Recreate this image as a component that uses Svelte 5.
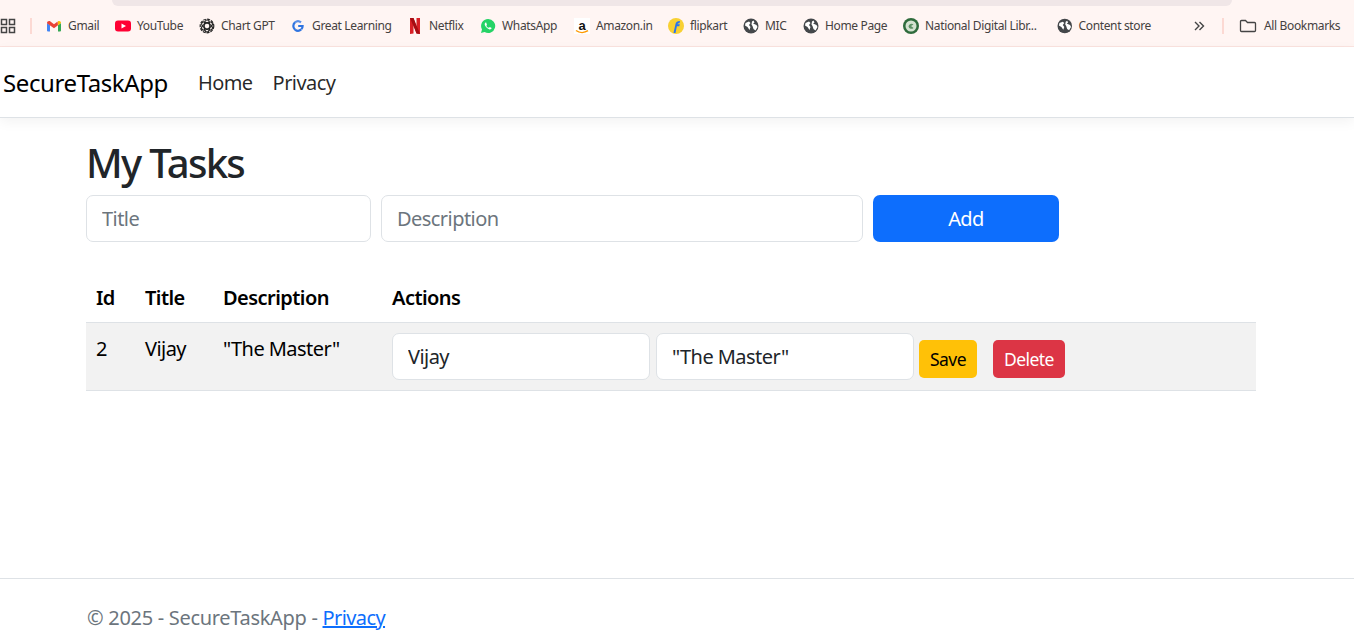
<script>
  const bookmarks = [
    { name: 'Gmail', icon: 'gmail', w: 69 },
    { name: 'YouTube', icon: 'youtube', w: 84 },
    { name: 'Chart GPT', icon: 'gpt', w: 91 },
    { name: 'Great Learning', icon: 'google', w: 117 },
    { name: 'Netflix', icon: 'netflix', w: 73 },
    { name: 'WhatsApp', icon: 'whatsapp', w: 94 },
    { name: 'Amazon.in', icon: 'amazon', w: 94 },
    { name: 'flipkart', icon: 'flipkart', w: 75 },
    { name: 'MIC', icon: 'globe', w: 60 },
    { name: 'Home Page', icon: 'globe', w: 100 },
    { name: 'National Digital Libr...', icon: 'ndl', w: 154 },
    { name: 'Content store', icon: 'globe', w: 94 }
  ];

  let tasks = [{ id: 2, title: 'Vijay', description: '"The Master"' }];
</script>

<div class="page">
  <div class="chrome">
    <div class="address"></div>
    <div class="bookmarks">
      <svg class="apps" width="16" height="16" viewBox="0 0 16 16" fill="none" stroke="#444" stroke-width="1.5">
        <rect x="1.5" y="1.5" width="5" height="5" />
        <rect x="9.5" y="1.5" width="5" height="5" />
        <rect x="1.5" y="9.5" width="5" height="5" />
        <rect x="9.5" y="9.5" width="5" height="5" />
      </svg>
      <span class="sep first"></span>
      {#each bookmarks as b}
        <div class="bookmark" style="width: {b.w}px">
          <svg width="16" height="16" viewBox="0 0 16 16">
            {#if b.icon === 'gmail'}
              <path d="M1 13.500V5l3 2.300v6.200H2a1 1 0 0 1-1-1z" fill="#4285f4" />
              <path d="M12 13.500V7.300L15 5v7.500a1 1 0 0 1-1 1z" fill="#34a853" />
              <path d="M1 5.300C1 3.300 3 2.400 4.400 3.500L8 6.300l3.600-2.800L12 7.300 8 10.300 1 5.300z" fill="#ea4335" />
              <path d="M12 7.300V3.200C13.500 2.400 15 3.400 15 5z" fill="#fbbc04" />
            {:else if b.icon === 'youtube'}
              <rect x="0" y="2.500" width="16" height="11" rx="3" fill="#ff0033" />
              <path d="M6.500 5.500 11 8l-4.500 2.500z" fill="#fff" />
            {:else if b.icon === 'gpt'}
              <g fill="none" stroke="#222" stroke-width="1.200">
                <circle cx="8" cy="8" r="6.800" stroke-dasharray="3 1" />
                <ellipse cx="8" cy="8" rx="6" ry="2.800" transform="rotate(30 8 8)" />
                <ellipse cx="8" cy="8" rx="6" ry="2.800" transform="rotate(90 8 8)" />
                <ellipse cx="8" cy="8" rx="6" ry="2.800" transform="rotate(150 8 8)" />
              </g>
            {:else if b.icon === 'google'}
              <path d="M11 4.400A4.700 4.700 0 0 0 5 4.400" fill="none" stroke="#5a8fe6" stroke-width="2.200" />
              <path d="M5 4.400A4.700 4.700 0 0 0 5 11.600" fill="none" stroke="#2f74e0" stroke-width="2.200" />
              <path d="M5 11.600A4.700 4.700 0 0 0 11.200 11.400" fill="none" stroke="#2f74e0" stroke-width="2.200" />
              <path d="M8.200 8h4.400c0 1.400-.4 2.500-1.300 3.300" fill="none" stroke="#2f74e0" stroke-width="2.200" />
            {:else if b.icon === 'netflix'}
              <path d="M3 0h3.500l3 9V0H13v16l-3.500-.6-3-8.900V15.400L3 16z" fill="#d81f26" />
              <path d="M3 0h3.500L13 16l-3.500-.6z" fill="#a50d13" />
            {:else if b.icon === 'whatsapp'}
              <path d="M8 1a7 7 0 0 0-6 10.500L1 15l3.600-1A7 7 0 1 0 8 1z" fill="#25d366" />
              <path d="M5.500 4.500c-1 .8-1 2.200-.2 3.500.9 1.500 2.300 2.900 4.200 3.400 1 .2 2-.4 2.200-1.400l-1.900-1-.8.800C7.900 10 6.800 8.900 6.300 7.800l.7-.8-.8-2.400z" fill="#fff" />
            {:else if b.icon === 'amazon'}
              <rect width="16" height="16" fill="#fff" />
              <text x="8" y="11.500" font-size="13" font-weight="700" text-anchor="middle" font-family="Liberation Sans, sans-serif" fill="#111">a</text>
              <path d="M2 12.500c3.500 2.500 8.500 2.500 12 .2" fill="none" stroke="#f90" stroke-width="1.500" />
            {:else if b.icon === 'flipkart'}
              <circle cx="8" cy="8" r="8" fill="#f8d032" />
              <path d="M5.500 15 7.500 6c.4-2 1.800-3 4.500-3l-.5 2.200c-1.300 0-1.700.2-2 1.100h2.300l-.5 2H8.900L7.500 15z" fill="#2874f0" />
            {:else if b.icon === 'globe'}
              <circle cx="8" cy="8" r="7.500" fill="#44474a" />
              <path d="M2.500 5 6 3.500 7.500 5 6 7 7.500 9 6.500 12 4.500 9 2 7.500zM10.500 2.500l1 2-1.500 1 3.500 1.500 1 2-2 3.500-2-1.500L9.500 8 8.500 6.500 9 3.500z" fill="#fff" />
            {:else if b.icon === 'ndl'}
              <circle cx="8" cy="8" r="8" fill="#2f6b3c" />
              <circle cx="8" cy="8" r="5.500" fill="#d4e2d0" />
              <path d="M5.500 8.500a3 3 0 0 1 5-2L8 8l2.500 2a3 3 0 0 1-5-1.500z" fill="#5d9165" />
            {/if}
          </svg>
          <span>{b.name}</span>
        </div>
      {/each}
      <svg class="more" width="12" height="12" viewBox="0 0 12 12" fill="none" stroke="#444" stroke-width="1.400">
        <path d="M2 2l4 4-4 4M6.500 2l4 4-4 4" />
      </svg>
      <span class="sep"></span>
      <div class="all">
        <svg width="18" height="16" viewBox="0 0 18 16" fill="none" stroke="#444" stroke-width="1.300">
          <path d="M1.500 3.500a1 1 0 0 1 1-1h4l2 2h7a1 1 0 0 1 1 1v7a1 1 0 0 1-1 1h-13a1 1 0 0 1-1-1z" />
        </svg>
        <span>All Bookmarks</span>
      </div>
    </div>
  </div>

  <nav>
    <a class="brand" href="#top">SecureTaskApp</a>
    <a href="#top">Home</a>
    <a href="#top">Privacy</a>
  </nav>

  <main>
    <h1>My Tasks</h1>
    <form class="add" on:submit|preventDefault>
      <input class="title" placeholder="Title" />
      <input class="desc" placeholder="Description" />
      <button class="primary">Add</button>
    </form>

    <table>
      <thead>
        <tr>
          <th class="c-id">Id</th>
          <th class="c-title">Title</th>
          <th class="c-desc">Description</th>
          <th>Actions</th>
        </tr>
      </thead>
      <tbody>
        {#each tasks as task}
          <tr>
            <td class="cell">{task.id}</td>
            <td class="cell">{task.title}</td>
            <td class="cell">{task.description}</td>
            <td>
              <div class="actions">
                <input value={task.title} />
                <input value={task.description} />
                <button class="small save">Save</button>
                <button class="small delete">Delete</button>
              </div>
            </td>
          </tr>
        {/each}
      </tbody>
    </table>
  </main>

  <footer>© 2025 - SecureTaskApp - <a href="#top">Privacy</a></footer>
</div>

<style>
  :global(body) {
    font-family: 'Noto Sans', sans-serif;
    color: #212529;
    overflow: hidden;
  }

  .page {
    height: 641px;
    display: flex;
    flex-direction: column;
    font-size: 20px;
    letter-spacing: -0.55px;
  }

  .chrome {
    height: 46px;
    background: #fff5f3;
    border-bottom: 1px solid #fbe3df;
    flex-shrink: 0;
    overflow: hidden;
  }

  .address {
    height: 6px;
    margin: 0 122px 0 112px;
    background: #f0e6e7;
    border-radius: 0 0 14px 14px;
  }

  .bookmarks {
    height: 40px;
    display: flex;
    align-items: center;
    font-size: 12px;
    color: #45413f;
    letter-spacing: -0.35px;
  }

  .bookmarks span:not(.sep) {
    margin-top: -1px;
  }

  .apps {
    flex-shrink: 0;
  }

  .sep {
    width: 2px;
    height: 16px;
    background: #fcd9d3;
    flex-shrink: 0;
  }

  .sep.first {
    margin: 0 14px;
  }

  .bookmark {
    display: flex;
    align-items: center;
    gap: 6px;
    flex-shrink: 0;
    white-space: nowrap;
  }

  .more {
    margin-left: 42px;
    flex-shrink: 0;
  }

  .more + .sep {
    margin-left: 17px;
  }

  .all {
    display: flex;
    align-items: center;
    gap: 7px;
    margin-left: 15px;
    white-space: nowrap;
  }

  nav {
    height: 70px;
    display: flex;
    align-items: center;
    gap: 20px;
    padding-left: 3px;
    background: #fff;
    border-bottom: 1px solid #dee2e6;
    box-shadow: 0 4px 12px rgba(0, 0, 0, 0.05);
    flex-shrink: 0;
  }

  nav a {
    color: rgba(0, 0, 0, 0.85);
    text-decoration: none;
  }

  nav .brand {
    font-size: 24px;
    letter-spacing: -0.4px;
    color: #000;
    margin-right: 10px;
  }

  main {
    flex: 1;
    width: 1170px;
    margin-left: 86px;
  }

  h1 {
    font-size: 40px;
    font-weight: 500;
    letter-spacing: -1.7px;
    line-height: 48px;
    margin: 21px 0 8px;
  }

  .add {
    display: flex;
    gap: 10px;
  }

  input {
    box-sizing: border-box;
    height: 47px;
    padding: 0 15px;
    border: 1px solid #dee2e6;
    border-radius: 7px;
    background: #fff;
    color: #212529;
    font: inherit;
    letter-spacing: inherit;
  }

  input::placeholder {
    color: #6c757d;
  }

  .title {
    width: 285px;
  }

  .desc {
    width: 482px;
  }

  button {
    border: none;
    font: inherit;
    letter-spacing: inherit;
  }

  .primary {
    width: 186px;
    height: 47px;
    border-radius: 7px;
    background: #0d6efd;
    color: #fff;
  }

  table {
    width: 100%;
    margin-top: 33px;
    border-collapse: collapse;
    color: #000;
  }

  th {
    height: 47px;
    padding: 0 10px 2px;
    box-sizing: border-box;
    text-align: left;
    font-weight: 600;
    border-bottom: 1px solid #dee2e6;
  }

  td {
    padding: 10px;
    vertical-align: top;
    background: #f2f2f2;
    border-bottom: 1px solid #dee2e6;
  }

  .cell {
    line-height: 32px;
  }

  .c-id {
    width: 49px;
  }

  .c-title {
    width: 78px;
  }

  .c-desc {
    width: 169px;
  }

  .actions {
    display: flex;
    align-items: center;
    gap: 6px;
  }

  .actions input {
    width: 258px;
  }

  .small {
    height: 38px;
    margin-top: 5px;
    border-radius: 5px;
    font-size: 17.5px;
    padding: 0 11px;
  }

  .save {
    background: #ffc107;
    color: #000;
    margin-left: -1px;
  }

  .delete {
    background: #dc3545;
    color: #fff;
    margin-left: 10px;
  }

  footer {
    height: 63px;
    box-sizing: border-box;
    border-top: 1px solid #dee2e6;
    padding: 24px 0 0 87px;
    color: #6c757d;
    line-height: 30px;
    flex-shrink: 0;
    letter-spacing: -0.3px;
  }

  footer a {
    color: #0d6efd;
    letter-spacing: -0.6px;
  }
</style>
